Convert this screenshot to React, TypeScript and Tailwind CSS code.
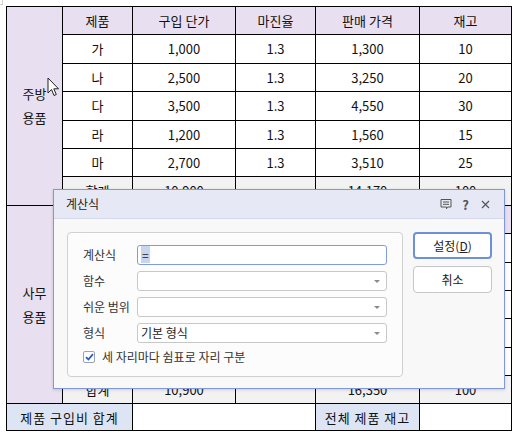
import React from 'react';

const font = { fontFamily: '"Noto Sans CJK KR", "Noto Sans", sans-serif' };

type Row = { name: string; cost: string; rate: string; price: string; stock: string };

const kitchen: Row[] = [
  { name: '가', cost: '1,000', rate: '1.3', price: '1,300', stock: '10' },
  { name: '나', cost: '2,500', rate: '1.3', price: '3,250', stock: '20' },
  { name: '다', cost: '3,500', rate: '1.3', price: '4,550', stock: '30' },
  { name: '라', cost: '1,200', rate: '1.3', price: '1,560', stock: '15' },
  { name: '마', cost: '2,700', rate: '1.3', price: '3,510', stock: '25' },
];

const office: Row[] = [
  { name: '바', cost: '1,000', rate: '1.5', price: '1,500', stock: '10' },
  { name: '사', cost: '2,500', rate: '1.5', price: '3,750', stock: '20' },
  { name: '아', cost: '3,500', rate: '1.5', price: '5,250', stock: '30' },
  { name: '자', cost: '1,200', rate: '1.5', price: '1,800', stock: '15' },
  { name: '차', cost: '2,700', rate: '1.5', price: '4,050', stock: '25' },
];

const td = 'border border-black text-center p-0';

const Section = ({ label, rows, total }: { label: string[]; rows: Row[]; total: string }) => (
  <>
    <tr className="h-[28.4px] bg-[#e8dff0]">
      <td rowSpan={7} className={td}>
        {label.map((l) => (
          <div key={l} className="leading-[24px]">{l}</div>
        ))}
      </td>
      <td className={td}>제품</td>
      <td className={td}>구입 단가</td>
      <td className={td}>마진율</td>
      <td className={td}>판매 가격</td>
      <td className={td}>재고</td>
    </tr>
    {rows.map((r) => (
      <tr key={r.name} className="h-[28.4px] bg-white">
        <td className={td}>{r.name}</td>
        <td className={td}>{r.cost}</td>
        <td className={td}>{r.rate}</td>
        <td className={td}>{r.price}</td>
        <td className={td}>{r.stock}</td>
      </tr>
    ))}
    <tr className="h-[28.4px] bg-[#f2f2f2]">
      <td className={td}>합계</td>
      <td className={td}>10,900</td>
      <td className={td}></td>
      <td className={td}>{total}</td>
      <td className={td}>100</td>
    </tr>
  </>
);

const Select = ({ value, focused }: { value?: React.ReactNode; focused?: boolean }) => (
  <div
    className={
      'flex items-center h-[20px] w-[250px] rounded-[3px] bg-white px-[3px] ' +
      (focused ? 'border border-[#7f9ddc]' : 'border border-[#c8c8c8]')
    }
  >
    <div className="flex-1 text-[12px] text-[#222] leading-none">{value}</div>
    {!focused && (
      <svg width="8" height="5" viewBox="0 0 8 5" className="mr-[2px]">
        <path d="M1 1 L7 1 L4 4 Z" fill="#8a8a8a" />
      </svg>
    )}
  </div>
);

export default function App() {
  return (
    <div className="relative w-[521px] h-[438px] bg-white text-[13px] text-[#111]" style={font}>
      <div className="absolute left-0 top-0 w-[3px] h-[5px] border-r border-b border-[#d0d0d0]" />
      <div className="pt-[6px] pl-[6px]">
        <table className="border-collapse table-fixed w-[505px]">
          <colgroup>
            <col className="w-[56px]" />
            <col className="w-[70px]" />
            <col className="w-[103px]" />
            <col className="w-[80px]" />
            <col className="w-[104px]" />
            <col className="w-[92px]" />
          </colgroup>
          <tbody>
            <Section label={['주방', '용품']} rows={kitchen} total="14,170" />
            <Section label={['사무', '용품']} rows={office} total="16,350" />
            <tr className="h-[27px]">
              <td colSpan={2} className={td + ' bg-[#dde5f5] tracking-[1px]'}>제품 구입비 합계</td>
              <td colSpan={2} className={td}></td>
              <td className={td + ' bg-[#dde5f5] tracking-[1px]'}>전체 제품 재고</td>
              <td className={td}></td>
            </tr>
          </tbody>
        </table>
      </div>

      {/* mouse cursor */}
      <svg className="absolute left-[47px] top-[77px]" width="14" height="20" viewBox="0 0 14 20">
        <path d="M1 1 L1 16 L4.5 12.5 L7 18.5 L9.3 17.5 L6.8 11.8 L11.5 11.8 Z" fill="white" stroke="#222" strokeWidth="1" strokeLinejoin="round" />
      </svg>

      {/* dialog */}
      <div className="absolute left-[53px] top-[189px] w-[452px] h-[200px] border border-[#8197d8] bg-[#f8f8f8] flex flex-col shadow-[0_1px_3px_rgba(0,0,0,0.15)]">
        <div className="h-[29px] bg-[#e6e9f5] border-b border-[#d3d7e6] flex items-center pl-[12px] pr-[14px]">
          <span className="flex-1 text-[12px] text-[#222]">계산식</span>
          <svg width="12" height="12" viewBox="0 0 12 12" className="mr-[10px]">
            <path d="M1 1.5 H11 V9 H7.5 L6.5 10.8 V9 H1 Z" fill="none" stroke="#555" strokeWidth="1" />
            <path d="M3 4 H9 M3 6.3 H9" stroke="#555" strokeWidth="1" />
          </svg>
          <span className="text-[13px] text-[#555] font-bold mr-[12px] leading-none">?</span>
          <svg width="9" height="9" viewBox="0 0 9 9">
            <path d="M1 1 L8 8 M8 1 L1 8" stroke="#555" strokeWidth="1.2" />
          </svg>
        </div>
        <div className="flex pl-[13px] pt-[13px] pr-[12px]">
          <div className="w-[336px] h-[145px] border border-[#d0d0d0] rounded-[4px] bg-[#fcfcfc] pl-[15px] pt-[12px] text-[12px] text-[#333]">
            <div className="flex items-center h-[20px]">
              <span className="w-[54px]">계산식</span>
              <Select focused value={<span className="bg-[#c8d5f0] px-[1px]">=</span>} />
            </div>
            <div className="flex items-center h-[20px] mt-[6px]">
              <span className="w-[54px]">함수</span>
              <Select />
            </div>
            <div className="flex items-center h-[20px] mt-[6px]">
              <span className="w-[54px] whitespace-nowrap">쉬운 범위</span>
              <Select />
            </div>
            <div className="flex items-center h-[20px] mt-[6px]">
              <span className="w-[54px]">형식</span>
              <Select value="기본 형식" />
            </div>
            <div className="flex items-center mt-[5px]">
              <span className="w-[12px] h-[12px] border border-[#9aa3b5] bg-white rounded-[2px] flex items-center justify-center mr-[7px]">
                <svg width="9" height="8" viewBox="0 0 9 8">
                  <path d="M1 4.2 L3.4 6.5 L8 1.2" fill="none" stroke="#2c5bb8" strokeWidth="1.8" />
                </svg>
              </span>
              <span>세 자리마다 쉼표로 자리 구분</span>
            </div>
          </div>
          <div className="flex flex-col ml-[10px] gap-[7px]">
            <button className="w-[79px] h-[27px] rounded-[4px] border-2 border-[#6d8fdc] bg-white text-[12px] text-[#222]">
              설정(<span className="underline">D</span>)
            </button>
            <button className="w-[79px] h-[27px] rounded-[4px] border border-[#c6c6c6] bg-white text-[12px] text-[#222]">
              취소
            </button>
          </div>
        </div>
      </div>
    </div>
  );
}
